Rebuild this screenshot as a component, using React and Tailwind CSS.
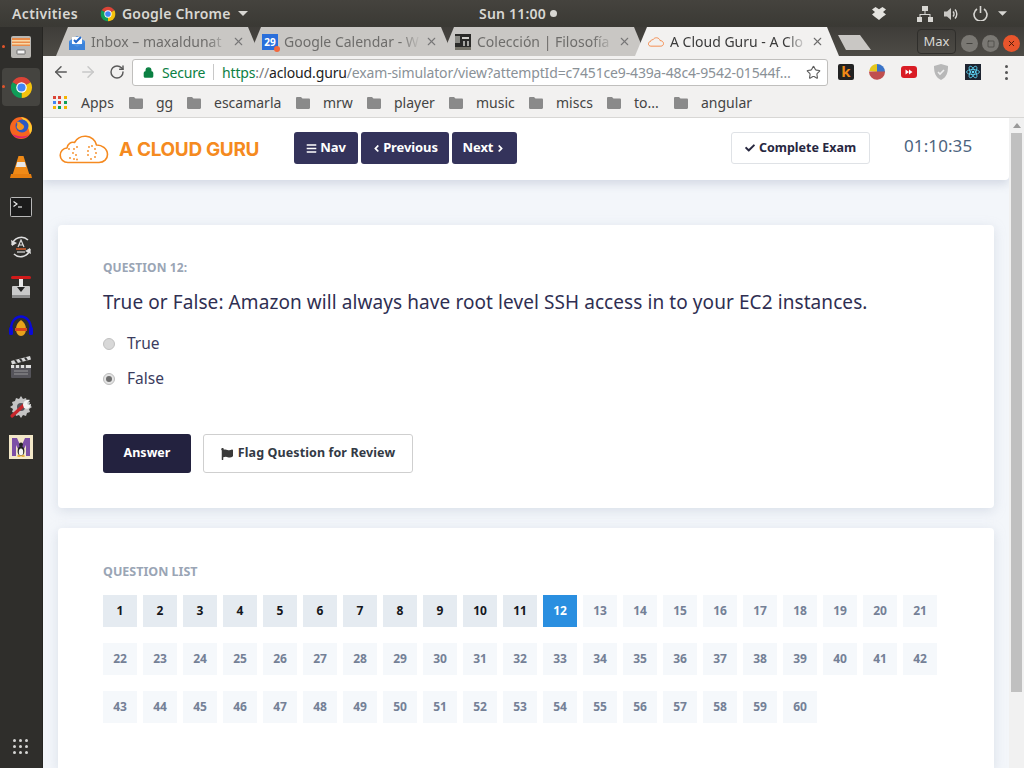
import React from "react";
import { FaBars, FaAngleLeft, FaAngleRight, FaCheck, FaFlag } from "react-icons/fa";
import { ArrowLeft, ArrowRight, RotateCw, Star, X, Lock, Minus, Square } from "lucide-react";

function Chrome({ s = 24 }) {
  return (
    <svg width={s} height={s} viewBox="0 0 48 48">
      <path d="M24 24 L4.95 13 A22 22 0 0 1 43.05 13 Z" fill="#db4437" />
      <path d="M24 24 L43.05 13 A22 22 0 0 1 24 46 Z" fill="#f4c20d" />
      <path d="M24 24 L24 46 A22 22 0 0 1 4.95 13 Z" fill="#0f9d58" />
      <circle cx="24" cy="24" r="11" fill="#fff" />
      <circle cx="24" cy="24" r="8.5" fill="#4285f4" />
    </svg>
  );
}
function Folder() {
  return (
    <svg width="14" height="12" viewBox="0 0 14 12">
      <path d="M0 1.2C0 .5.5 0 1.2 0H5l1.5 1.5h6.3c.7 0 1.2.5 1.2 1.2v8c0 .7-.5 1.2-1.2 1.2H1.2C.5 12 0 11.500 0 10.800Z" fill="#8a8a8a" />
    </svg>
  );
}
function Cloud({ w, h, stroke, sw = 2, dots }) {
  return (
    <svg width={w} height={h} viewBox="0 0 50 29" fill="none">
      <path d="M9 27.5C4.5 27.5 1.2 24.3 1.2 20.3 1.2 16.3 4.2 13.3 8 13 8.5 9 12 6.5 15.5 7.5 18 3.2 22.5 1 27 1.3 32 1.6 36.5 5 37.5 10 42.5 9.8 48.5 13.5 48.5 19.5 48.5 24 45 27.5 40 27.5Z" stroke={stroke} strokeWidth={sw} strokeLinejoin="round" />
      {dots && (
        <g fill={stroke}>
          <circle cx="10" cy="14" r=".9" /><circle cx="15" cy="14" r=".9" /><circle cx="18" cy="12" r=".9" /><circle cx="14" cy="18" r=".9" /><circle cx="17" cy="20" r=".9" /><circle cx="15" cy="24" r=".9" /><circle cx="18" cy="24.5" r=".9" /><circle cx="11" cy="23" r=".9" />
          <circle cx="30" cy="12" r=".9" /><circle cx="33" cy="11" r=".9" /><circle cx="36" cy="14" r=".9" /><circle cx="29" cy="16" r=".9" /><circle cx="37" cy="18" r=".9" /><circle cx="29" cy="20" r=".9" /><circle cx="36" cy="22" r=".9" /><circle cx="32" cy="24" r=".9" />
        </g>
      )}
    </svg>
  );
}

const DockFiles = () => (
  <svg width="24" height="24" viewBox="0 0 24 24">
    <rect x="2" y="1" width="20" height="22" rx="2" fill="#b9b7b3" />
    <rect x="3" y="3" width="18" height="8" fill="#e98c4a" />
    <rect x="3" y="5" width="18" height="1.5" fill="#f8d9a8" />
    <rect x="3" y="8" width="18" height="1.5" fill="#f8d9a8" />
    <rect x="8" y="15" width="8" height="4" rx=".5" fill="#f4f4f4" stroke="#555" strokeWidth=".8" />
  </svg>
);
const DockFirefox = () => (
  <svg width="24" height="24" viewBox="0 0 24 24">
    <circle cx="12" cy="13" r="11" fill="#f6651f" />
    <path d="M12 2c5 1 11 5 11 11 0 3-1 5-2 6-1-6-4-11-9-17Z" fill="#ffcb2e" />
    <path d="M3 19c3 5 12 6 17 1-4 2-11 2-17-1Z" fill="#e0226b" />
    <circle cx="13" cy="11" r="6.5" fill="#2b59c3" />
    <path d="M8 7c3-1 3 1 5 2s3 3 1 5-5 1-6-1 1-2 0-6Z" fill="#f7931e" />
  </svg>
);
const DockVlc = () => (
  <svg width="22" height="24" viewBox="0 0 22 24">
    <path d="M8.5 1h5l6 19h-17Z" fill="#f08a17" />
    <path d="M7.2 7h7.6l1.3 5H5.9Z" fill="#e8e8e8" />
    <path d="M1 19h20l1 4H0Z" fill="#e67e0f" />
  </svg>
);
const DockTerm = () => (
  <svg width="22" height="20" viewBox="0 0 22 20">
    <rect x=".5" y=".5" width="21" height="19" rx="1" fill="#1b1b1b" stroke="#b8b8b8" />
    <path d="M3.500 4.500 7 7l-3.500 2.500" stroke="#e8e8e8" strokeWidth="1.2" fill="none" />
    <path d="M8 10h4" stroke="#e8e8e8" strokeWidth="1.2" />
  </svg>
);
const DockUpdate = () => (
  <svg width="22" height="22" viewBox="0 0 22 22" fill="none">
    <path d="M2 9a9.5 9.5 0 0 1 16-5" stroke="#ddd" strokeWidth="1.6" />
    <path d="M20 13a9.5 9.5 0 0 1-16 5" stroke="#ddd" strokeWidth="1.6" />
    <path d="M1 4l1 6 5-3Z M21 18l-1-6-5 3Z" fill="#ddd" />
    <path d="M8 11l3-7 3 7M9 9h4" stroke="#ddd" strokeWidth="1.2" />
    <path d="M6 13h10" stroke="#e2622c" strokeWidth="1.4" />
    <path d="M7 16h8" stroke="#ddd" strokeWidth="1.2" />
  </svg>
);
const DockJoy = () => (
  <svg width="22" height="24" viewBox="0 0 22 24">
    <rect x="2" y="11" width="18" height="11" rx="1" fill="#c9c9c9" />
    <rect x="2" y="20" width="18" height="3" fill="#8c8c8c" />
    <rect x="9" y="3" width="4" height="11" fill="#e8e8e8" />
    <rect x="1" y="1" width="20" height="3" rx="1.5" fill="#d01a1a" />
    <path d="M7 12h8l-4 5Z" fill="#222" />
  </svg>
);
const DockAudacity = () => (
  <svg width="26" height="24" viewBox="0 0 26 24" fill="none">
    <path d="M3 14C3 6 8 1.500 13 1.500S23 6 23 14" stroke="#0a0ad8" strokeWidth="2.4" />
    <rect x="1" y="12" width="4" height="8" rx="1.5" fill="#0a0ad8" />
    <rect x="21" y="12" width="4" height="8" rx="1.5" fill="#0a0ad8" />
    <path d="M13 5c3 2 5 5 5 9s-2 7-5 7-5-3-5-7 2-7 5-9Z" fill="#e8a21a" />
    <path d="M7 13h12v3H7Z" fill="#d8461c" />
  </svg>
);
const DockClap = () => (
  <svg width="22" height="24" viewBox="0 0 22 24">
    <path d="M1 6 20 1l1 3.500L2 9.500Z" fill="#d8d8d8" />
    <path d="M4 5.200l2 3 2-.5-2-3ZM9 4l2 3 2-.5-2-3ZM14 2.700l2 3 2-.5-2-3Z" fill="#333" />
    <rect x="1" y="10" width="20" height="13" rx="1" fill="#55545a" />
    <rect x="1" y="10" width="20" height="3" fill="#e0e0e0" />
    <path d="M5 10v3M10 10v3M15 10v3" stroke="#333" strokeWidth="1.5" />
    <path d="M4 16h14M4 19h14" stroke="#aaa" strokeWidth=".8" />
  </svg>
);
const DockTools = () => (
  <svg width="24" height="24" viewBox="0 0 24 24">
    <path d="M12 1l2 3 3-1 1 3 3 1-1 3 3 2-3 2 1 3-3 1-1 3-3-1-2 3-2-3-3 1-1-3-3-1 1-3-3-2 3-2-1-3 3-1 1-3 3 1Z" fill="#c4c4c4" />
    <circle cx="12" cy="12" r="4" fill="#55545a" />
    <path d="M3 21 15 10" stroke="#c8262c" strokeWidth="3.2" strokeLinecap="round" />
    <path d="M14 10c0-3 3-6 7-5l-3 3 1 2 3-1c0 4-4 6-7 4Z" fill="#f2f2f2" />
  </svg>
);
const DockTex = () => (
  <svg width="24" height="24" viewBox="0 0 24 24">
    <rect width="24" height="24" fill="#f3e8c8" />
    <path d="M3 3h5l4 9 4-9h5v18h-4V10l-3 6h-4l-3-6v11H3Z" fill="#7c4fa6" />
    <ellipse cx="12" cy="16" rx="3.4" ry="5" fill="#222" />
    <ellipse cx="12" cy="17" rx="2.2" ry="3.6" fill="#f4f4f4" />
    <circle cx="12" cy="9.5" r="2" fill="#222" />
    <path d="M8.500 21h3M12.500 21h3" stroke="#e8a21a" strokeWidth="1.4" />
  </svg>
);

function DockSlot({ children, active, dot }) {
  return (
    <div className={`relative w-[38px] h-[38px] ml-[2px] mb-[2px] flex items-center justify-center rounded-[4px] ${active ? "bg-[#454440]" : ""}`}>
      {dot && <span className="absolute -left-[0px] top-[17px] w-[3px] h-[3px] rounded-full bg-[#e2542a]" />}
      {children}
    </div>
  );
}

function Tab({ first, active, children, label, z, text }) {
  return (
    <div className={`relative ${first ? "" : "-ml-[11px]"} ${z} w-[204px] h-[29px] shrink-0 ${active ? "bg-[#f2f1f0]" : "bg-[#c9c7c4]"} [clip-path:polygon(0_100%,12px_0,192px_0,204px_100%)] flex items-center pl-[13px]`}>
      <div className="w-[16px] h-[16px] shrink-0 flex items-center justify-center">{children}</div>
      <div className={`ml-[6px] w-[137px] whitespace-nowrap overflow-hidden text-[14px] [mask-image:linear-gradient(to_right,black_85%,transparent)] ${text}`}>{label}</div>
      <X size={13} strokeWidth={2} className={`ml-[4px] ${active ? "text-[#6c6c6c]" : "text-[#777]"}`} />
    </div>
  );
}

const bookmarks = [
  ["gg", "w-[58px]"],
  ["escamarla", "w-[109px]"],
  ["mrw", "w-[71px]"],
  ["player", "w-[82px]"],
  ["music", "w-[80px]"],
  ["miscs", "w-[78px]"],
  ["to...", "w-[67px]"],
  ["angular", "w-[90px]"],
];

function NavBtn({ w, children }) {
  return (
    <button className={`${w} h-[32px] rounded-[3px] bg-[#34335b] text-white text-[13px] font-bold tracking-[-0.1px] flex items-center justify-center`}>{children}</button>
  );
}

export default function App() {
  const nums = Array.from({ length: 60 }, (_, i) => i + 1);
  return (
    <div className="w-[1024px] h-[768px] overflow-hidden flex flex-col bg-[#2f2e2b] [font-family:'Noto_Sans','Open_Sans',sans-serif]">
      {/* system bar */}
      <div className="h-[27px] shrink-0 flex items-center bg-gradient-to-b from-[#45433e] to-[#3a3934] text-[#d8d7d3] text-[14px] font-semibold">
        <span className="ml-[12px] w-[88px] tracking-[0.35px]">Activities</span>
        <Chrome s={16} />
        <span className="ml-[6px] w-[110px] whitespace-nowrap tracking-[0.2px]">Google Chrome</span>
        <svg width="10" height="5" viewBox="0 0 10 5" className="ml-[6px]"><path d="M0 0h10L5 5Z" fill="#d8d7d3" /></svg>
        <span className="ml-[231px] w-[68px] whitespace-nowrap tracking-[0.2px]">Sun 11:00</span>
        <span className="ml-[3px] w-[7px] h-[7px] rounded-full bg-[#d8d7d3]" />
        <svg width="14" height="13" viewBox="0 0 14 13" className="ml-[315px]"><path d="M3.500 0 7 2.200 10.500 0 14 2.500 11 5l3 2.500-3.500 2.500L7 13 3 10 0 7.500 3 5 0 2.500Z" fill="#e4e3df" /></svg>
        <svg width="16" height="16" viewBox="0 0 16 16" className="ml-[31px]" fill="#d8d7d3"><rect x="5" y="0" width="6" height="5" /><rect x="0" y="11" width="5" height="5" /><rect x="11" y="11" width="5" height="5" /><path d="M7.500 5h1v3h5v3h-1V9H3.500v2h-1V8h5Z" /></svg>
        <svg width="15" height="14" viewBox="0 0 15 14" className="ml-[11px]" fill="none"><path d="M0 4.500h3L7 1v12L3 9.500H0Z" fill="#c9c8c4" /><path d="M9 4.500a3.500 3.500 0 0 1 0 5M11 2.500a6.500 6.500 0 0 1 0 9" stroke="#d8d7d3" strokeWidth="1.400" /></svg>
        <svg width="15" height="15" viewBox="0 0 15 15" className="ml-[14px]" fill="none" stroke="#d8d7d3" strokeWidth="1.600"><path d="M4 3a6.500 6.500 0 1 0 7 0" /><path d="M7.500 0v7" /></svg>
        <svg width="9" height="5" viewBox="0 0 10 5" className="ml-[10px]"><path d="M0 0h10L5 5Z" fill="#d8d7d3" /></svg>
      </div>

      <div className="flex-1 flex min-h-0">
        {/* dock */}
        <div className="w-[43px] shrink-0 flex flex-col pt-[1px] pb-[1px] bg-[#2f2e2b] border-r border-[#262522]">
          <DockSlot dot><DockFiles /></DockSlot>
          <DockSlot active dot><Chrome s={23} /></DockSlot>
          <DockSlot><DockFirefox /></DockSlot>
          <DockSlot><DockVlc /></DockSlot>
          <DockSlot><DockTerm /></DockSlot>
          <DockSlot><DockUpdate /></DockSlot>
          <DockSlot><DockJoy /></DockSlot>
          <DockSlot><DockAudacity /></DockSlot>
          <DockSlot><DockClap /></DockSlot>
          <DockSlot><DockTools /></DockSlot>
          <DockSlot><DockTex /></DockSlot>
          <div className="mt-auto ml-[13px] mb-[12px] w-[16px] h-[16px] grid grid-cols-3 gap-[2px]">
            {Array.from({ length: 9 }, (_, i) => <span key={i} className="w-[3px] h-[3px] rounded-full bg-[#d5d5d3]" />)}
          </div>
        </div>

        {/* chrome window */}
        <div className="flex-1 min-w-0 flex flex-col">
          {/* tab strip */}
          <div className="h-[29px] shrink-0 flex items-end bg-gradient-to-b from-[#3f3d39] to-[#4d4b46] pl-[13px]">
            <Tab first z="z-[3]" label="Inbox – maxaldunat" text="text-[#6e6d6b]">
              <svg width="16" height="16" viewBox="0 0 16 16"><path d="M0 7 8 2l8 5v8H0Z" fill="#4a90e2" /><path d="M3 3h10v7H3Z" fill="#fff" /><path d="M5 6l2 2 5-5" stroke="#2468c8" strokeWidth="2" fill="none" /><path d="M0 8l8 5 8-5v8H0Z" fill="#3b82d9" /></svg>
            </Tab>
            <Tab z="z-[2]" label="Google Calendar - W" text="text-[#6e6d6b]">
              <div className="relative w-[16px] h-[16px] bg-[#2a6fdb] text-white text-[10px] font-bold leading-[17px] text-center">
                29
                <span className="absolute -right-[2px] -bottom-[2px] w-[6px] h-[6px] rounded-full bg-[#f2683c]" />
              </div>
            </Tab>
            <Tab z="z-[1]" label="Colección | Filosofía" text="text-[#6e6d6b]">
              <svg width="16" height="16" viewBox="0 0 16 16"><rect width="16" height="16" fill="#2a2a28" /><rect x="0" y="2" width="5" height="7" fill="#8a8a85" /><rect x="7" y="3" width="7" height="2" fill="#cfcfca" /><rect x="8" y="7" width="2" height="5" fill="#a5a5a0" /><rect x="12" y="7" width="2" height="5" fill="#a5a5a0" /><rect x="0" y="13" width="16" height="3" fill="#76746a" /></svg>
            </Tab>
            <Tab active z="z-[4]" label="A Cloud Guru - A Clo" text="text-[#3b3b3b]">
              <Cloud w={16} h={10} stroke="#f58a4b" sw={3} />
            </Tab>
            <div className="-ml-[1px] mb-[6px] w-[33px] h-[15px] bg-[#c9c7c4] [clip-path:polygon(0_0,22px_0,33px_100%,8px_100%)]" />
            <div className="ml-[46px] mb-[2px] w-[39px] h-[25px] rounded-[4px] border border-[#2f2e2b] text-[13px] text-[#d9d8d4] flex items-center justify-center">Max</div>
            <div className="ml-[5px] mb-[4px] flex gap-[4px]">
              <span className="w-[17px] h-[17px] rounded-full bg-[#7a7873] flex items-center justify-center"><Minus size={9} strokeWidth={2} className="text-[#33322e]" /></span>
              <span className="w-[17px] h-[17px] rounded-full bg-[#7a7873] flex items-center justify-center"><Square size={8} strokeWidth={1.600} className="text-[#33322e]" /></span>
              <span className="w-[17px] h-[17px] rounded-full bg-[#e9552c] flex items-center justify-center"><X size={9} strokeWidth={2.500} className="text-[#4a1a0a]" /></span>
            </div>
          </div>

          {/* toolbar */}
          <div className="h-[32px] shrink-0 flex items-center bg-[#f2f1f0]">
            <ArrowLeft size={18} strokeWidth={2} className="ml-[9px] text-[#5a5a5a]" />
            <ArrowRight size={18} strokeWidth={2} className="ml-[9px] text-[#c8c8c8]" />
            <RotateCw size={16} strokeWidth={2.200} className="ml-[12px] text-[#5a5a5a]" />
            <div className="ml-[7px] w-[696px] h-[27px] bg-white border border-[#c0bfbd] rounded-[3px] flex items-center text-[14px] whitespace-nowrap overflow-hidden">
              <Lock size={11} strokeWidth={3} fill="#0b8043" className="ml-[10px] text-[#0b8043]" />
              <span className="ml-[8px] w-[44px] text-[#0b8043] tracking-[-0.2px]">Secure</span>
              <span className="ml-[7px] w-px h-[16px] bg-[#c8c8c8]" />
              <span className="ml-[8px] w-[575px] overflow-hidden tracking-[-0.15px]">
                <span className="text-[#0b8043]">https</span><span className="text-[#7a7a7a]">://</span><span className="text-[#222]">acloud.guru</span><span className="text-[#8a9197]">/exam-simulator/view?attemptId=c7451ce9-439a-48c4-9542-01544f…</span>
              </span>
              <Star size={15} strokeWidth={1.800} className="ml-[9px] text-[#5e5e5e]" />
            </div>
            <div className="ml-[10px] w-[16px] h-[16px] bg-[#222] rounded-[2px] text-[#f08a17] text-[15px] font-bold leading-[15px] text-center">k</div>
            <svg width="16" height="16" viewBox="0 0 16 16" className="ml-[15px]"><path d="M8 8 .2 7A8 8 0 0 1 8 0Z" fill="#e5c71d" /><path d="M8 8V0a8 8 0 0 1 8 8Z" fill="#3a74c8" /><path d="M0 7.500h16A8 8 0 0 1 0 8Z" fill="#c04f4f" /></svg>
            <svg width="16" height="12" viewBox="0 0 16 12" className="ml-[16px]"><rect width="16" height="12" rx="3" fill="#d91c24" /><path d="M4.500 3.500 8 6l-3.500 2.500ZM8 3.500 11.500 6 8 8.500Z" fill="#fff" /></svg>
            <svg width="16" height="16" viewBox="0 0 16 16" className="ml-[16px]"><path d="M8 0l7 2c0 6-1 11-7 14C2 13 1 8 1 2Z" fill="#b8b8b8" /><path d="M5 8l2 2 4-4" stroke="#eee" strokeWidth="1.600" fill="none" /></svg>
            <svg width="16" height="16" viewBox="0 0 16 16" className="ml-[16px]" fill="none"><rect width="16" height="16" fill="#1e2430" /><circle cx="8" cy="8" r="1.300" fill="#5fd8f8" /><ellipse cx="8" cy="8" rx="6.500" ry="2.500" stroke="#5fd8f8" strokeWidth=".8" /><ellipse cx="8" cy="8" rx="6.500" ry="2.500" stroke="#5fd8f8" strokeWidth=".8" transform="rotate(60 8 8)" /><ellipse cx="8" cy="8" rx="6.500" ry="2.500" stroke="#5fd8f8" strokeWidth=".8" transform="rotate(120 8 8)" /></svg>
            <div className="ml-[24px] flex flex-col gap-[3px]">
              <span className="w-[3px] h-[3px] rounded-full bg-[#555]" />
              <span className="w-[3px] h-[3px] rounded-full bg-[#555]" />
              <span className="w-[3px] h-[3px] rounded-full bg-[#555]" />
            </div>
          </div>

          {/* bookmarks */}
          <div className="h-[30px] shrink-0 flex items-center bg-[#f2f1f0] border-b border-[#d8d7d5] text-[14px] text-[#444] whitespace-nowrap">
            <div className="ml-[10px] w-[14px] h-[14px] grid grid-cols-3 gap-[2px]">
              {["#db4437","#db4437","#f4b400","#4285f4","#db4437","#0f9d58","#f4b400","#0f9d58","#f4b400"].map((c, i) => <span key={i} className="w-[3px] h-[3px]" style={{ background: c }} />)}
            </div>
            <span className="ml-[14px] w-[48px]">Apps</span>
            {bookmarks.map(([t, w]) => (
              <div key={t} className={`${w} flex items-center shrink-0`}>
                <Folder />
                <span className="ml-[13px] text-[14px]">{t}</span>
              </div>
            ))}
          </div>

          {/* page + scrollbar */}
          <div className="flex-1 min-h-0 flex">
            <div className="w-[966px] shrink-0 bg-[#f3f6fa] overflow-hidden flex flex-col">
              <header className="h-[62px] shrink-0 bg-white rounded-br-[4px] shadow-[0_4px_10px_rgba(170,180,200,0.45)] flex items-center">
                <div className="ml-[16px] flex items-center">
                  <Cloud w={50} h={29} stroke="#f58a20" sw={1.600} dots />
                  <span className="ml-[10px] mt-[3px] w-[141px] whitespace-nowrap text-[#f58a20] text-[19px] font-bold tracking-[-0.35px] [font-family:'Inter',sans-serif]">A CLOUD GURU</span>
                </div>
                <div className="ml-[34px] -mt-[2px] flex gap-[3px]">
                  <NavBtn w="w-[64px]"><FaBars size={11} className="mr-[3px]" /><span>Nav</span></NavBtn>
                  <NavBtn w="w-[88px]"><FaAngleLeft size={11} className="-ml-[1px] mr-[1px]" /><span>Previous</span></NavBtn>
                  <NavBtn w="w-[65px]"><span>Next</span><FaAngleRight size={11} className="ml-[2px]" /></NavBtn>
                </div>
                <button className="ml-[214px] -mt-[2px] w-[139px] h-[32px] rounded-[3px] bg-white border border-[#dfe2e6] text-[#27273f] text-[12.500px] font-bold flex items-center justify-center gap-[4px]">
                  <FaCheck size={10} /> Complete Exam
                </button>
                <span className="ml-[34px] -mt-[6px] text-[17px] text-[#4d6480] tracking-[0.1px]">01:10:35</span>
              </header>

              <div className="mt-[45px] mx-[15px] h-[283px] shrink-0 bg-white rounded-[4px] shadow-[0_3px_12px_rgba(170,180,200,0.35)] pl-[45px] pt-[36px]">
                <div className="text-[12px] font-bold text-[#9aa5b5] tracking-[0.1px] leading-[14px]">QUESTION 12:</div>
                <div className="mt-[14px] text-[19px] text-[#2f2f52] leading-[26px] tracking-[0.08px] whitespace-nowrap">True or False: Amazon will always have root level SSH access in to your EC2 instances.</div>
                <div className="mt-[17px] flex items-center h-[24px] text-[#3b3c5e] text-[15.500px]">
                  <span className="w-[12px] h-[12px] rounded-full bg-[#d8d8d8] border border-[#c0c0c0]" />
                  <span className="ml-[12px]">True</span>
                </div>
                <div className="mt-[11px] flex items-center h-[24px] text-[#3b3c5e] text-[15.500px]">
                  <span className="w-[12px] h-[12px] rounded-full bg-[#e4e4e4] border border-[#bcbcbc] flex items-center justify-center"><span className="w-[6px] h-[6px] rounded-full bg-[#6e6e6e]" /></span>
                  <span className="ml-[12px]">False</span>
                </div>
                <div className="mt-[43px] flex gap-[12px]">
                  <button className="w-[88px] h-[39px] rounded-[3px] bg-[#23223f] text-white text-[12.500px] font-bold">Answer</button>
                  <button className="w-[210px] h-[39px] rounded-[3px] bg-white border border-[#cfcfcf] text-[#333a45] text-[12.500px] font-bold tracking-[0.1px] flex items-center justify-center gap-[5px]">
                    <FaFlag size={12} className="text-[#3a3a3a]" /> Flag Question for Review
                  </button>
                </div>
              </div>

              <div className="mt-[20px] mx-[15px] flex-1 bg-white rounded-t-[4px] shadow-[0_3px_12px_rgba(170,180,200,0.35)] pl-[45px] pt-[37px]">
                <div className="text-[12.500px] font-bold text-[#9aa5b5] leading-[14px]">QUESTION LIST</div>
                <div className="mt-[16px] grid grid-cols-[repeat(21,34px)] gap-x-[6px] gap-y-[16px]">
                  {nums.map((n) => (
                    <div key={n} className={`h-[32px] flex items-center justify-center text-[12px] font-bold ${n === 12 ? "bg-[#2a8fe0] text-white" : n < 12 ? "bg-[#e5ebf1] text-[#15171c]" : "bg-[#f5f8fb] text-[#748096]"}`}>{n}</div>
                  ))}
                </div>
              </div>
            </div>
            <div className="w-[15px] shrink-0 bg-[#f1f1f1] flex flex-col items-center">
              <svg width="8" height="5" viewBox="0 0 8 5" className="mt-[5px]"><path d="M4 0l4 5H0Z" fill="#9a9a9a" /></svg>
              <div className="mt-[5px] w-[11px] h-[559px] bg-[#c0c0c0]" />
            </div>
          </div>
        </div>
      </div>
    </div>
  );
}
